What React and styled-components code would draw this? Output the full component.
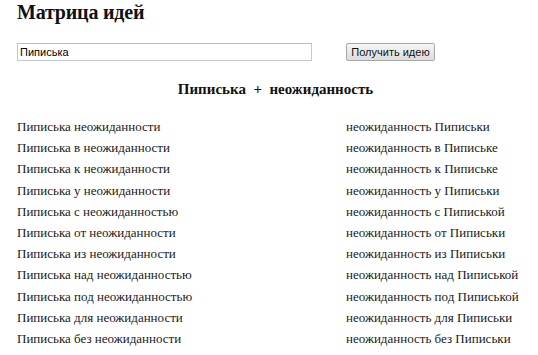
import React from "react";
import styled, { createGlobalStyle } from "styled-components";

const Global = createGlobalStyle`
  html, body { margin: 0; padding: 0; background: #fff; }
  body { font-family: "Liberation Serif", "Times New Roman", serif; color: #111; }
`;

const Page = styled.div`
  width: 517px;
  padding: 0 0 0 17px;
`;

const Title = styled.h1`
  margin: 0;
  font-size: 20px;
  font-weight: bold;
  line-height: 24px;
  letter-spacing: -0.2px;
  color: #111;
`;

const Form = styled.div`
  display: flex;
  align-items: center;
  margin-top: 19px;
  height: 18px;
`;

const Input = styled.input`
  box-sizing: border-box;
  width: 295px;
  height: 18px;
  margin: 0;
  padding: 0 2px;
  border: 1px solid #c6c9d1;
  border-top-color: #b9bcc4;
  font-family: "Liberation Sans", Arial, sans-serif;
  font-size: 11px;
  color: #000;
  outline: none;
`;

const Button = styled.button`
  box-sizing: border-box;
  margin-left: 34px;
  width: 89px;
  height: 18px;
  padding: 0;
  border: 1px solid #a7a7a7;
  border-radius: 2px;
  background: linear-gradient(#f6f6f6, #dcdcdc);
  font-family: "Liberation Sans", Arial, sans-serif;
  font-size: 11px;
  color: #111;
`;

const Sub = styled.h2`
  margin: 19px 0 0;
  text-align: center;
  font-size: 15px;
  line-height: 18px;
  font-weight: bold;
  white-space: pre;
`;

const Matrix = styled.div`
  display: grid;
  grid-template-columns: 329px 1fr;
  grid-auto-rows: 21.2px;
  margin-top: 18px;
  font-size: 13px;
  line-height: 21.2px;
`;

const Cell = styled.div`
  white-space: nowrap;
  color: #1a1a1a;
`;

const a = "Пиписька";
const b = "неожиданность";
const rows = [
  ["Пиписька неожиданности", "неожиданность Пиписьки"],
  ["Пиписька в неожиданности", "неожиданность в Пипиське"],
  ["Пиписька к неожиданности", "неожиданность к Пипиське"],
  ["Пиписька у неожиданности", "неожиданность у Пиписьки"],
  ["Пиписька с неожиданностью", "неожиданность с Пиписькой"],
  ["Пиписька от неожиданности", "неожиданность от Пиписьки"],
  ["Пиписька из неожиданности", "неожиданность из Пиписьки"],
  ["Пиписька над неожиданностью", "неожиданность над Пиписькой"],
  ["Пиписька под неожиданностью", "неожиданность под Пиписькой"],
  ["Пиписька для неожиданности", "неожиданность для Пиписьки"],
  ["Пиписька без неожиданности", "неожиданность без Пиписьки"],
];

export default function App() {
  return (
    <>
      <Global />
      <Page>
        <Title>Матрица идей</Title>
        <Form>
          <Input defaultValue={a} />
          <Button>Получить идею</Button>
        </Form>
        <Sub>{`${a}  +  ${b}`}</Sub>
        <Matrix>
          {rows.map(([l, r], i) => (
            <React.Fragment key={i}>
              <Cell>{l}</Cell>
              <Cell>{r}</Cell>
            </React.Fragment>
          ))}
        </Matrix>
      </Page>
    </>
  );
}
